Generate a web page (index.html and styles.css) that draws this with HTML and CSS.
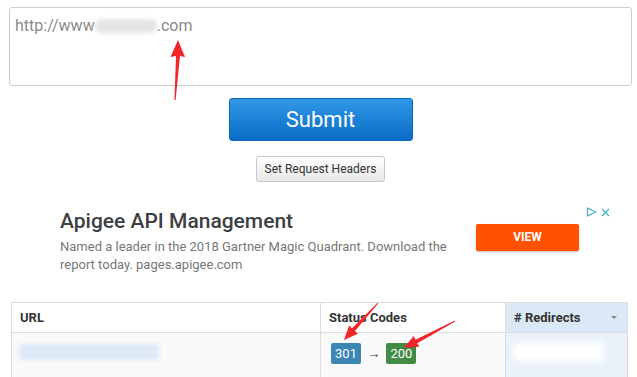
FILE: index.html
```html
<!DOCTYPE html>
<html lang="en">

<head>
    <meta charset="UTF-8">
    <title>Redirect Checker</title>
    <link rel="stylesheet" href="styles.css">
</head>

<body>
    <div class="page">
        <div class="url-box">http://www<span class="smudge"></span>.com</div>

        <button class="submit">Submit</button>
        <button class="headers">Set Request Headers</button>

        <div class="ad">
            <div class="ad-text">
                <div class="ad-title">Apigee API Management</div>
                <div class="ad-desc">Named a leader in the 2018 Gartner Magic Quadrant. Download the report today. pages.apigee.com</div>
            </div>
            <button class="ad-view">VIEW</button>
            <div class="ad-choices">
                <svg width="11" height="10" viewBox="0 0 11 10"><path d="M1.5 1 L1.5 9 L9.5 5 Z" fill="none" stroke="#4fb0c6" stroke-width="1.3"/></svg>
                <svg width="9" height="9" viewBox="0 0 9 9"><path d="M1 1 L8 8 M8 1 L1 8" stroke="#4fb0c6" stroke-width="1.3"/></svg>
            </div>
        </div>

        <table class="results">
            <thead>
                <tr>
                    <th class="col-url">URL</th>
                    <th class="col-status">Status Codes</th>
                    <th class="col-redir sorted">
                        <div class="th-inner"># Redirects <span class="caret"></span></div>
                    </th>
                </tr>
            </thead>
            <tbody>
                <tr>
                    <td><span class="url-smudge"></span></td>
                    <td class="status-cell">
                        <span class="badge badge-redirect">301</span>
                        <span class="arrow">&rarr;</span>
                        <span class="badge badge-ok">200</span>
                    </td>
                    <td class="sorted"><span class="redir-smudge"></span></td>
                </tr>
            </tbody>
        </table>
    </div>

    <!-- hand-drawn annotation arrows -->
    <svg class="marks" width="637" height="377" viewBox="0 0 637 377">
        <polygon fill="#f0262a" points="174.4,100 176,56 170.5,57 178,40 185,57 180,56 175.6,100"/>
        <polygon fill="#f0262a" points="378.4,303.3 355,331.1 357.9,333.8 344,340 349.1,325.6 352,328.3 377.6,302.7"/>
        <polygon fill="#f0262a" points="455.2,321.4 417.3,343.2 419.2,346.8 404,348 413.6,336.1 415.5,339.7 454.8,320.6"/>
    </svg>
</body>

</html>
```

FILE: styles.css
```css
body {
    margin: 0;
    font-family: Roboto, "Liberation Sans", sans-serif;
    background: #fff;
    color: #333;
}

.page {
    padding: 7px 5px 0 9px;
}

.url-box {
    height: 61px;
    padding: 8px 5px;
    border: 1px solid #ccc;
    border-radius: 3px;
    font-size: 16px;
    line-height: 20px;
    color: #8a8a8a;
}

.smudge {
    display: inline-block;
    width: 62px;
    height: 14px;
    vertical-align: -2px;
    background: #e4e4e4;
    border-radius: 6px;
    filter: blur(2px);
}

.submit {
    display: block;
    width: 184px;
    height: 43px;
    margin: 12px auto 0 auto;
    border: 1px solid #0b69bb;
    border-radius: 3px;
    background: linear-gradient(#2f98e8, #0a6cc5);
    color: #fff;
    font-family: inherit;
    font-size: 22px;
    cursor: pointer;
}

.headers {
    display: block;
    width: 129px;
    height: 26px;
    margin: 15px auto 0 auto;
    padding: 0;
    border: 1px solid #c8c8c8;
    border-radius: 3px;
    background: linear-gradient(#fff, #e8e8e8);
    color: #333;
    font-family: inherit;
    font-size: 12px;
}

.ad {
    position: relative;
    display: flex;
    align-items: center;
    margin-top: 19px;
    padding: 0 0 0 51px;
    height: 80px;
}

.ad-text {
    width: 410px;
}

.ad-title {
    font-size: 21px;
    font-weight: 500;
    color: #3c4043;
    line-height: 26px;
}

.ad-desc {
    margin-top: 4px;
    font-size: 13px;
    line-height: 18px;
    color: #777;
}

.ad-view {
    width: 103px;
    height: 27px;
    margin-left: 6px;
    margin-top: -8px;
    border: none;
    border-radius: 2px;
    background: #ff5100;
    box-shadow: 0 1px 2px rgba(0, 0, 0, 0.25);
    color: #fff;
    font-family: inherit;
    font-size: 12px;
    font-weight: 700;
}

.ad-choices {
    position: absolute;
    top: 6px;
    right: 22px;
    display: flex;
    gap: 4px;
    align-items: center;
}

.results {
    width: 617px;
    margin: 21px 0 0 2px;
    border-collapse: collapse;
    border: 1px solid #ddd;
    font-size: 13px;
}

.results th {
    height: 29px;
    padding: 0 8px;
    text-align: left;
    font-weight: 700;
    border: 1px solid #ddd;
}

.col-url {
    width: 292px;
}

.col-status {
    width: 168px;
}

.results th.sorted {
    background: #dbe9f6;
}

.th-inner {
    display: flex;
    justify-content: space-between;
    align-items: center;
}

.caret {
    width: 0;
    height: 0;
    margin-right: 2px;
    border-left: 3px solid transparent;
    border-right: 3px solid transparent;
    border-top: 3px solid #888;
}

.results td {
    height: 40px;
    padding: 0 10px 6px 7px;
    background: #f9f9f9;
    border: 1px solid #ddd;
    border-bottom: none;
}

.results td.status-cell {
    padding-left: 10px;
}

.results td.sorted {
    background: #eaf2f9;
}

.url-smudge {
    display: inline-block;
    width: 140px;
    height: 16px;
    background: #dde9f7;
    filter: blur(2px);
}

.redir-smudge {
    display: inline-block;
    width: 90px;
    height: 18px;
    background: #fff;
    filter: blur(3px);
}

.badge {
    display: inline-block;
    width: 30px;
    height: 21px;
    line-height: 21px;
    text-align: center;
    border-radius: 2px;
    color: #fff;
    font-size: 13px;
}

.badge-redirect {
    background: #3a86b5;
}

.badge-ok {
    background: #418b45;
}

.arrow {
    margin: 0 3px;
    color: #333;
}

.marks {
    position: absolute;
    top: 0;
    left: 0;
    pointer-events: none;
}
```
